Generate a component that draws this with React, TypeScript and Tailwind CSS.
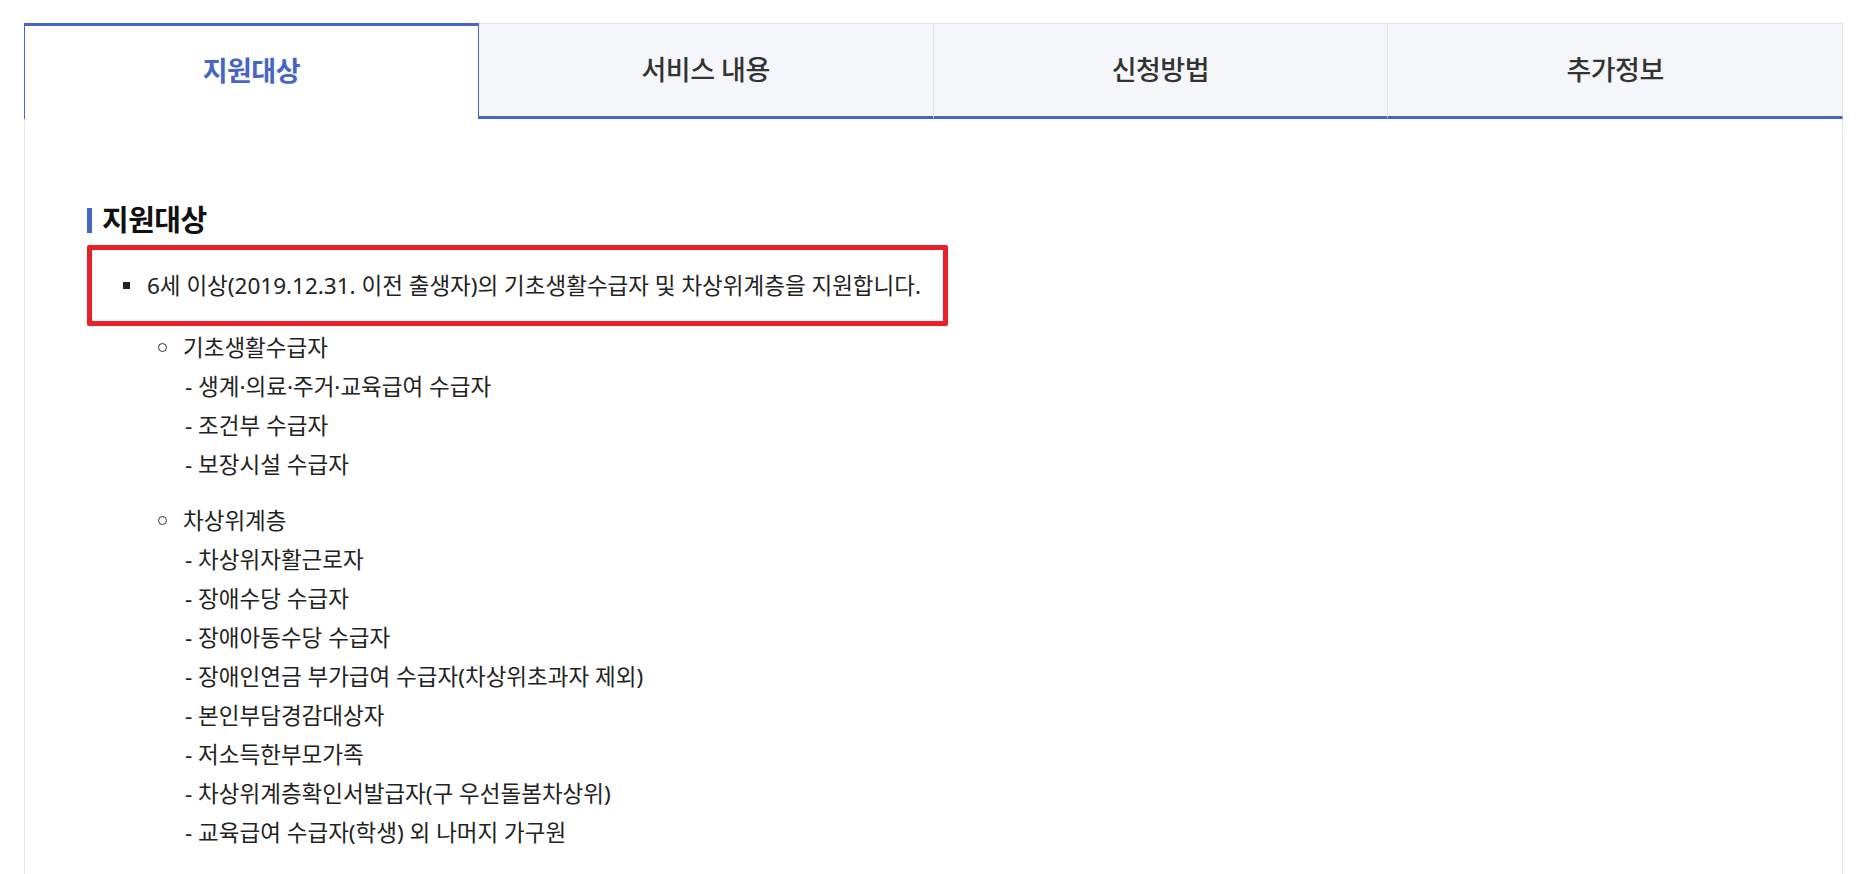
import React from "react";

const tabs = ["지원대상", "서비스 내용", "신청방법", "추가정보"];

const groups = [
  {
    title: "기초생활수급자",
    items: ["생계·의료·주거·교육급여 수급자", "조건부 수급자", "보장시설 수급자"],
  },
  {
    title: "차상위계층",
    items: [
      "차상위자활근로자",
      "장애수당 수급자",
      "장애아동수당 수급자",
      "장애인연금 부가급여 수급자(차상위초과자 제외)",
      "본인부담경감대상자",
      "저소득한부모가족",
      "차상위계층확인서발급자(구 우선돌봄차상위)",
      "교육급여 수급자(학생) 외 나머지 가구원",
    ],
  },
];

export default function App() {
  return (
    <div
      className="min-h-screen bg-white pt-[23px] pl-[24px] text-[#222]"
      style={{ fontFamily: '"Noto Sans", "Noto Sans CJK KR", sans-serif' }}
    >
      <div className="w-[1819px]">
        {/* tabs */}
        <div className="flex h-[96px]">
          {tabs.map((tab, i) =>
            i === 0 ? (
              <div
                key={tab}
                className="flex w-1/4 items-center justify-center border-x border-t-[3px] border-[#4565c7] bg-white pb-[2px] text-[27px] font-bold tracking-[-0.5px] text-[#4565c7]"
              >
                {tab}
              </div>
            ) : (
              <div
                key={tab}
                className="flex w-1/4 items-center justify-center border-t border-r border-[#e1e4ea] border-b-[3px] border-b-[#4565c7] bg-[#f5f6f9] text-[27px] font-medium tracking-[-0.5px] text-[#333]"
              >
                {tab}
              </div>
            )
          )}
        </div>

        {/* content */}
        <div className="h-[760px] border-x border-[#e6e6e6] pl-[62px] pt-[85px]">
          <h3 className="flex items-center gap-[10px] text-[29px] leading-[32px] font-bold tracking-[-0.5px] text-[#111]">
            <span className="h-[25px] w-[5px] bg-[#4565c7]" />
            지원대상
          </h3>

          <div className="mt-[9px] w-[861px] rounded-[2px] border-[5px] border-[#e8202a] py-[16px] pl-[31px]">
            <div className="flex items-center gap-[17px] text-[22.5px] leading-[39px]">
              <span className="h-[7px] w-[7px] bg-[#222]" />
              6세 이상(2019.12.31. 이전 출생자)의 기초생활수급자 및 차상위계층을 지원합니다.
            </div>
          </div>

          <div className="mt-[2px] pl-[71px] text-[22.5px] leading-[39px]">
            {groups.map((g, gi) => (
              <div key={g.title} className={gi > 0 ? "mt-[17px]" : ""}>
                <div className="flex items-center gap-[16px]">
                  <span className="h-[9px] w-[9px] rounded-full border border-[#333]" />
                  {g.title}
                </div>
                <ul className="pl-[27px]">
                  {g.items.map((it) => (
                    <li key={it}>- {it}</li>
                  ))}
                </ul>
              </div>
            ))}
          </div>
        </div>
      </div>
    </div>
  );
}
